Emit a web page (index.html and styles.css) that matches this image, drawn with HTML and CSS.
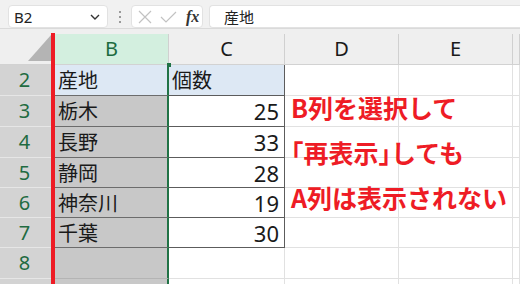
FILE: index.html
```html
<!DOCTYPE html>
<html lang="ja">
<head>
	<meta charset="utf-8">
	<title>B列を選択して再表示</title>
	<link rel="stylesheet" href="styles.css">
</head>
<body>
	<div class="toolbar">
		<div class="namebox">
			<span>B2</span>
			<svg class="chev" width="10" height="6" viewBox="0 0 10 6"><path d="M1 1 L5 5 L9 1" fill="none" stroke="#333" stroke-width="1.4"/></svg>
		</div>
		<svg class="dots" width="4" height="12" viewBox="0 0 4 12">
			<rect x="1" y="0" width="2" height="2" fill="#9a9a9a"/>
			<rect x="1" y="5" width="2" height="2" fill="#9a9a9a"/>
			<rect x="1" y="10" width="2" height="2" fill="#9a9a9a"/>
		</svg>
		<div class="fxbox">
			<svg width="14" height="14" viewBox="0 0 14 14"><path d="M1 1 L13 13 M13 1 L1 13" stroke="#c2c2c2" stroke-width="1.2"/></svg>
			<svg width="17" height="12" viewBox="0 0 17 12"><path d="M1 6 L6 11 L16 1" fill="none" stroke="#c2c2c2" stroke-width="1.2"/></svg>
			<span class="fx">fx</span>
		</div>
		<div class="formula">産地</div>
	</div>

	<div class="sheet">
		<div class="grid">
			<div class="corner"><div class="tri"></div></div>
			<div class="colhead sel">B</div>
			<div class="colhead">C</div>
			<div class="colhead">D</div>
			<div class="colhead">E</div>
			<div class="colhead"></div>

			<div class="rowhead">2</div>
			<div class="cell b head">産地</div>
			<div class="cell c head">個数</div>
			<div class="cell"></div><div class="cell"></div><div class="cell"></div>

			<div class="rowhead">3</div>
			<div class="cell b">栃木</div>
			<div class="cell c num">25</div>
			<div class="cell"></div><div class="cell"></div><div class="cell"></div>

			<div class="rowhead">4</div>
			<div class="cell b">長野</div>
			<div class="cell c num">33</div>
			<div class="cell"></div><div class="cell"></div><div class="cell"></div>

			<div class="rowhead">5</div>
			<div class="cell b">静岡</div>
			<div class="cell c num">28</div>
			<div class="cell"></div><div class="cell"></div><div class="cell"></div>

			<div class="rowhead">6</div>
			<div class="cell b">神奈川</div>
			<div class="cell c num">19</div>
			<div class="cell"></div><div class="cell"></div><div class="cell"></div>

			<div class="rowhead">7</div>
			<div class="cell b">千葉</div>
			<div class="cell c num">30</div>
			<div class="cell"></div><div class="cell"></div><div class="cell"></div>

			<div class="rowhead">8</div>
			<div class="cell b out"></div>
			<div class="cell"></div>
			<div class="cell"></div><div class="cell"></div><div class="cell"></div>

			<div class="rowhead"></div>
			<div class="cell b out"></div>
			<div class="cell"></div>
			<div class="cell"></div><div class="cell"></div><div class="cell"></div>
		</div>

		<div class="hidden-a"></div>
		<div class="handle"></div>

		<div class="note">
			<p>B列を選択して</p>
			<p><span class="kakko">「</span>再表示<span class="kakko">」</span>しても</p>
			<p>A列は表示されない</p>
		</div>
	</div>
</body>
</html>
```

FILE: styles.css
```css
body {
	margin: 0;
	width: 520px;
	height: 284px;
	overflow: hidden;
	background: #fff;
	font-family: "Noto Sans", "Noto Sans CJK JP", sans-serif;
}

/* toolbar */

.toolbar {
	height: 29px;
	background: #f1f1f1;
	border-bottom: 1px solid #dadada;
	display: flex;
	align-items: flex-start;
	padding-top: 5px;
	box-sizing: border-box;
	white-space: nowrap;
}

.namebox {
	margin-left: 8px;
	width: 100px;
	height: 23px;
	background: #fff;
	border: 1px solid #e2e2e2;
	border-radius: 4px;
	box-sizing: border-box;
	display: flex;
	align-items: center;
	justify-content: space-between;
	padding: 0 7px 0 5px;
	font-size: 15px;
	color: #222;
}

.dots {
	margin: 6px 9px 0 10px;
}

.fxbox {
	width: 72px;
	height: 23px;
	background: #fff;
	border: 1px solid #e2e2e2;
	border-radius: 4px;
	box-sizing: border-box;
	display: flex;
	align-items: center;
	gap: 8px;
	padding-left: 6px;
}

.fx {
	font-family: "Liberation Serif", serif;
	font-style: italic;
	font-weight: bold;
	font-size: 16px;
	color: #333;
	margin-left: 1px;
}

.formula {
	margin-left: 6px;
	flex: 1;
	height: 23px;
	background: #fff;
	border: 1px solid #e2e2e2;
	border-right: none;
	border-radius: 4px 0 0 4px;
	box-sizing: border-box;
	padding-left: 14px;
	font-family: "Noto Sans CJK JP", sans-serif;
	font-size: 15px;
	line-height: 21px;
	color: #222;
}

/* sheet */

.sheet {
	position: relative;
	padding-top: 5px;
	background: #efefef;
}

.grid {
	display: grid;
	grid-template-columns: 55px 114px 116px 114px 114px 7px;
	grid-template-rows: 31px 31px 31px 31px 30px 30px 30px 31px 10px;
	background: #fff;
}

.corner {
	background: #efefef;
	border-bottom: 1px solid #d2d2d2;
	position: relative;
}

.tri {
	position: absolute;
	right: 4px;
	bottom: 3px;
	width: 0;
	height: 0;
	border-left: 23px solid transparent;
	border-bottom: 26px solid #b4b4b4;
}

.colhead {
	background: #efefef;
	border-right: 1px solid #d0d0d0;
	border-bottom: 1px solid #d2d2d2;
	text-align: center;
	font-size: 20px;
	line-height: 30px;
	color: #1a1a1a;
}

.colhead.sel {
	background: #d3efdf;
	color: #1d6b3f;
}

.rowhead {
	background: #d3d3d3;
	border-bottom: 1px solid #e6e6e6;
	text-align: center;
	padding-right: 6px;
	font-size: 20px;
	line-height: 30px;
	color: #1f6b41;
}

.cell {
	border-right: 1px solid #e1e1e1;
	border-bottom: 1px solid #e1e1e1;
	font-family: "Noto Sans CJK JP", sans-serif;
	font-size: 20px;
	line-height: 30px;
	color: #1a1a1a;
	padding: 0 3px;
	overflow: hidden;
}

.cell.b {
	background: #c8c8c8;
	border-bottom-color: #6c6c6c;
	border-right: 2px solid #217346;
}

.cell.b.out {
	border-bottom-color: #b4b4b4;
}

.cell.c {
	border-right-color: #5c5c5c;
	border-bottom-color: #5c5c5c;
}

.cell.head {
	background: #dde8f4;
}

.cell.num {
	text-align: right;
	padding-right: 5px;
	font-family: "Noto Sans", sans-serif;
	font-size: 22px;
}

/* overlays */

.hidden-a {
	position: absolute;
	left: 51px;
	top: 4px;
	width: 4px;
	bottom: 0;
	background: #ee1c25;
}

.handle {
	position: absolute;
	left: 167px;
	top: 34px;
	width: 4px;
	height: 4px;
	background: #217346;
}

.note {
	position: absolute;
	left: 291px;
	top: 56px;
	font-family: "Noto Sans CJK JP", sans-serif;
	font-weight: bold;
	font-size: 25px;
	line-height: 45px;
	color: #ee1c25;
	white-space: nowrap;
}

.note p {
	margin: 0;
}

.kakko {
	font-feature-settings: "halt";
}
```
